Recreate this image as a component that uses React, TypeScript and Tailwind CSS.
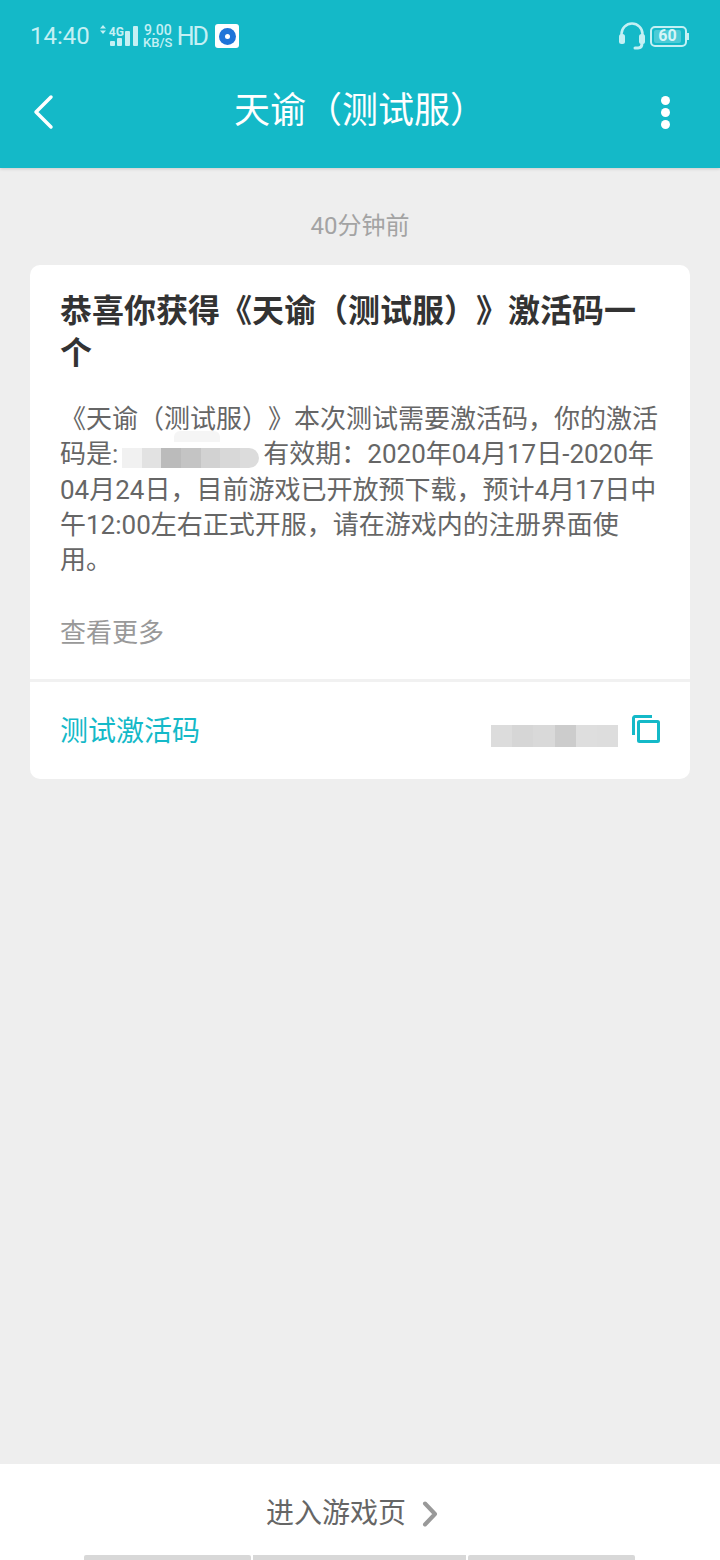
const font = { fontFamily: 'Roboto, "Noto Sans CJK SC", sans-serif' };

function SignalIcon() {
  return (
    <div className="relative h-[24px] w-[39px]">
      <svg width="39" height="24" viewBox="0 0 39 24" fill="#c4f0f4">
        <path d="M1 4.500l3-3.500 3 3.500zM1 6.500h6L4 10z" />
        <rect x="11" y="17" width="5" height="5" rx="1" />
        <rect x="18" y="14" width="5" height="8" rx="1" />
        <rect x="26" y="7" width="5" height="15" rx="1" />
        <rect x="34" y="2" width="5" height="20" rx="1" />
      </svg>
      <span className="absolute left-[10px] top-[1px] text-[12px] font-bold leading-[14px] text-[#c4f0f4]">4G</span>
    </div>
  );
}

function AppBadge() {
  return (
    <div className="flex h-6 w-6 items-center justify-center rounded-[3px] bg-white">
      <div className="flex h-[17px] w-[17px] items-center justify-center rounded-full bg-[#1f74d8]">
        <div className="h-[5px] w-[5px] rounded-full bg-white" />
      </div>
    </div>
  );
}

function Headset() {
  return (
    <svg width="26" height="28" viewBox="0 0 26 28" fill="none" stroke="#c4f0f4" strokeWidth="2.500">
      <path d="M2.500 14V12a10.500 10.500 0 0 1 21 0v2" />
      <rect x="0" y="12" width="6" height="10" rx="2.500" fill="#c4f0f4" stroke="none" />
      <rect x="20" y="12" width="6" height="10" rx="2.500" fill="#c4f0f4" stroke="none" />
      <path d="M23 21c0 3-1 5-4 5h-3" strokeLinecap="round" strokeWidth="3" />
    </svg>
  );
}

function Battery() {
  return (
    <div className="flex items-center">
      <div className="flex h-[21px] w-[37px] items-center rounded-[5px] border-2 border-[#c4f0f4] p-[2px]">
        <div className="flex h-full w-[27px] items-center justify-center rounded-[2px] bg-[#4ccbd6] text-[16px] font-bold leading-none text-[#d6f5f8]">
          60
        </div>
      </div>
      <div className="h-[7px] w-[2px] bg-[#c4f0f4]" />
    </div>
  );
}

function BackIcon() {
  return (
    <svg width="24" height="36" viewBox="0 0 24 36" fill="none" stroke="white" strokeWidth="3.500" strokeLinecap="round" strokeLinejoin="round">
      <path d="M21 3L6 18l15 15" />
    </svg>
  );
}

function CopyIcon() {
  return (
    <svg className="mb-[6px]" width="28" height="28" viewBox="0 0 28 28" fill="none" stroke="#14b9c8" strokeWidth="3">
      <path d="M1.500 20V3a1.500 1.500 0 0 1 1.500-1.500H20" />
      <rect x="6.500" y="6.500" width="20" height="20" rx="1" />
    </svg>
  );
}

function MoreIcon() {
  return (
    <svg width="16" height="26" viewBox="0 0 16 26" fill="none" stroke="#999999" strokeWidth="4" strokeLinecap="round" strokeLinejoin="round">
      <path d="M3 2.500L13 13 3 23.500" />
    </svg>
  );
}

function Smudge({ cells, className }: { cells: string[]; className: string }) {
  return (
    <span className={`inline-flex overflow-hidden ${className}`}>
      {cells.map((c, i) => (
        <span key={i} className="h-full flex-1" style={{ background: c }} />
      ))}
    </span>
  );
}

export default function App() {
  return (
    <div className="flex h-[1560px] w-[720px] flex-col overflow-hidden bg-[#eeeeee] [text-spacing-trim:space-all]" style={font}>
      <header className="h-[168px] shrink-0 bg-[#14b9c8] px-[30px] shadow-[0_1px_3px_rgba(0,0,0,0.15)]">
        <div className="flex h-[72px] items-center justify-between">
          <div className="flex items-center text-[#c4f0f4]">
            <span className="text-[24px] leading-none">14:40</span>
            <div className="ml-[9px]">
              <SignalIcon />
            </div>
            <div className="ml-[6px] flex w-[28px] flex-col items-center font-medium">
              <span className="text-[14px] leading-[14px]">9.00</span>
              <span className="text-[13px] leading-[12px]">KB/S</span>
            </div>
            <span className="ml-[5px] text-[25px] leading-none tracking-[-2px]">HD</span>
            <div className="ml-[8px]">
              <AppBadge />
            </div>
          </div>
          <div className="flex items-center gap-[5px] pr-[1px]">
            <Headset />
            <Battery />
          </div>
        </div>
        <div className="relative flex h-[78px] items-center justify-center">
          <div className="absolute left-[0px] top-[22px]">
            <BackIcon />
          </div>
          <h1 className="text-[36px] font-normal leading-none text-white">天谕（测试服）</h1>
          <div className="absolute right-[20px] top-[24px] flex flex-col gap-[3px]">
            <div className="h-[9px] w-[9px] rounded-full bg-white" />
            <div className="h-[9px] w-[9px] rounded-full bg-white" />
            <div className="h-[9px] w-[9px] rounded-full bg-white" />
          </div>
        </div>
      </header>

      <main className="flex-1 px-[30px]">
        <p className="pt-[41px] text-center text-[24px] leading-[34px] text-[#a3a3a3]">40分钟前</p>
        <div className="mt-[22px] h-[514px] overflow-hidden rounded-[10px] bg-white">
          <div className="h-[417px] border-b-[3px] border-[#f1f1f1] px-[30px] pt-[25px]">
            <h2 className="text-[32px] font-bold leading-[42px] text-[#333333]">
              恭喜你获得《天谕（测试服）》激活码一个
            </h2>
            <p className="mt-[28px] text-[26px] leading-[35.3px] text-[#666666]">
              《天谕（测试服）》本次测试需要激活码，你的激活码是:
              <span className="relative mx-[4px] inline-block">
                <span className="absolute left-[52px] top-[-6px] h-[11px] w-[46px] rounded-t-[6px] bg-[#f5f5f5]" />
                <Smudge
                  className="h-[20px] w-[137px] translate-y-[5px] rounded-r-[10px]"
                  cells={['#f1f1f1', '#e2e2e2', '#bbbbbb', '#c4c4c4', '#d2d2d2', '#d8d8d8', '#dcdcdc']}
                />
              </span>
              有效期：2020年04月17日-2020年04月24日，目前游戏已开放预下载，预计4月17日中午12:00左右正式开服，请在游戏内的注册界面使用。
            </p>
            <p className="mt-[37px] text-[26px] leading-[36px] text-[#999999]">查看更多</p>
          </div>
          <div className="flex h-[97px] items-center justify-between pl-[30px] pr-[30px] pt-[3px]">
            <span className="text-[28px] leading-none text-[#14b9c8]">测试激活码</span>
            <div className="flex items-center gap-[14px]">
              <Smudge
                className="mt-[7px] h-[22px] w-[127px]"
                cells={['#dcdcdc', '#d6d6d6', '#d9d9d9', '#cccccc', '#dedede', '#dddddd']}
              />
              <CopyIcon />
            </div>
          </div>
        </div>
      </main>

      <footer className="h-[96px] shrink-0 bg-white">
        <div className="flex h-[91px] items-center justify-center pr-[16px] pt-[8px]">
          <span className="text-[28px] leading-none text-[#666666]">进入游戏页</span>
          <div className="ml-[16px]">
            <MoreIcon />
          </div>
        </div>
        <div className="mx-[84px] flex h-[5px] gap-[2px]">
          <div className="w-[167px] rounded-t-[2px] bg-[#d8d8d8]" />
          <div className="w-[213px] bg-[#d8d8d8]" />
          <div className="w-[167px] rounded-t-[2px] bg-[#d8d8d8]" />
        </div>
      </footer>
    </div>
  );
}
